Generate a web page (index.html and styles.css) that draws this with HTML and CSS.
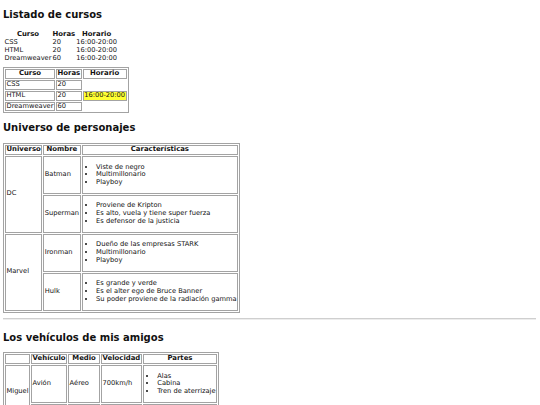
FILE: index.html
```html
<!DOCTYPE html>
<html lang="es">
<head>
<meta charset="utf-8">
<title>Tablas</title>
<link rel="stylesheet" href="styles.css">
</head>
<body>
<div class="page">
  <h2 class="first">Listado de cursos</h2>
  <table class="plain">
    <tr><th>Curso</th><th>Horas</th><th>Horario</th></tr>
    <tr><td>CSS</td><td>20</td><td>16:00-20:00</td></tr>
    <tr><td>HTML</td><td>20</td><td>16:00-20:00</td></tr>
    <tr><td>Dreamweaver</td><td>60</td><td>16:00-20:00</td></tr>
  </table>
  <table class="grid courses">
    <tr><th>Curso</th><th>Horas</th><th>Horario</th></tr>
    <tr><td>CSS</td><td>20</td></tr>
    <tr><td>HTML</td><td>20</td><td class="hl">16:00-20:00</td></tr>
    <tr><td>Dreamweaver</td><td>60</td></tr>
  </table>

  <h2>Universo de personajes</h2>
  <table class="grid">
    <tr><th>Universo</th><th>Nombre</th><th>Características</th></tr>
    <tr>
      <td rowspan="2">DC</td>
      <td>Batman</td>
      <td><ul><li>Viste de negro</li><li>Multimillonario</li><li>Playboy</li></ul></td>
    </tr>
    <tr>
      <td>Superman</td>
      <td><ul><li>Proviene de Kripton</li><li>Es alto, vuela y tiene super fuerza</li><li>Es defensor de la justicia</li></ul></td>
    </tr>
    <tr>
      <td rowspan="2">Marvel</td>
      <td>Ironman</td>
      <td><ul><li>Dueño de las empresas STARK</li><li>Multimillonario</li><li>Playboy</li></ul></td>
    </tr>
    <tr>
      <td>Hulk</td>
      <td><ul><li>Es grande y verde</li><li>Es el alter ego de Bruce Banner</li><li>Su poder proviene de la radiación gamma</li></ul></td>
    </tr>
  </table>

  <hr class="sep">

  <h2>Los vehículos de mis amigos</h2>
  <table class="grid">
    <tr><th></th><th>Vehículo</th><th class="col-medio">Medio</th><th>Velocidad</th><th>Partes</th></tr>
    <tr>
      <td rowspan="2">Miguel</td>
      <td>Avión</td>
      <td>Aéreo</td>
      <td>700km/h</td>
      <td><ul><li>Alas</li><li>Cabina</li><li>Tren de aterrizaje</li></ul></td>
    </tr>
    <tr class="more">
      <td></td>
      <td></td>
      <td></td>
      <td></td>
    </tr>
  </table>
</div>
</body>
</html>
```
FILE: styles.css
```css
html, body {
  margin: 0;
  background: #ffffff;
}

body {
  font-family: "DejaVu Sans", Verdana, sans-serif;
  font-size: 6.7px;
  line-height: 7.6px;
  color: #111111;
}

.page {
  padding: 9px 4px 0 3px;
}

h2 {
  font-size: 10px;
  line-height: 11.6px;
  font-weight: bold;
  margin: 9px 0;
}

h2.first {
  margin-top: 0;
}

table {
  border-collapse: separate;
  empty-cells: show;
}

th {
  font-weight: bold;
  text-align: center;
  font-size: 6.9px;
}

td {
  text-align: left;
}

.plain {
  border-spacing: 0;
  margin-left: 1px;
}

.plain th,
.plain td {
  padding: 0 0.5px;
  line-height: 8.3px;
}

.grid {
  border: 1px solid #a3a3a3;
  border-spacing: 1px;
}

.grid th,
.grid td {
  border: 1px solid #a3a3a3;
  padding: 0 0.5px;
  line-height: 7.9px;
}

.grid li {
  line-height: 7.6px;
}

.grid th.col-medio {
  width: 29px;
}

.more td {
  height: 12px;
}

.courses {
  margin-top: 4px;
}

.hl {
  background: #ffff33;
}

ul {
  margin: 6.6px 0;
  padding-left: 13px;
}

.sep {
  border: 0;
  border-top: 1px solid #cfcfcf;
  border-bottom: 1px solid #ededed;
  height: 0;
  margin: 5px 0 12px;
}
```
